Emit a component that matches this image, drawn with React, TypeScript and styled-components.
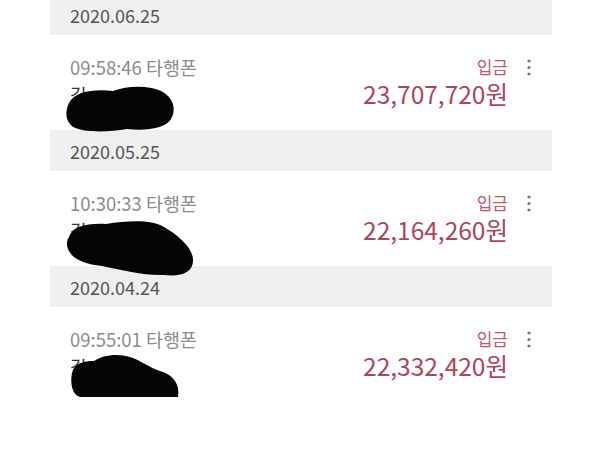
import styled, { createGlobalStyle } from "styled-components";

const GlobalStyle = createGlobalStyle`
	body {
		margin: 0;
		background: #ffffff;
		font-family: "Noto Sans CJK KR", "Noto Sans", sans-serif;
		overflow: hidden;
	}
`;

const Page = styled.div`
	width: 594px;
	height: 458px;
	padding: 0 42px 0 50px;
	box-sizing: border-box;
	overflow: hidden;
`;

const List = styled.div`
	display: flex;
	flex-direction: column;
	margin-top: -6px;
`;

const DateHeader = styled.div`
	height: 41px;
	display: flex;
	align-items: center;
	padding-left: 20px;
	background: #efefef;
	color: #555555;
	font-size: 18px;
	position: relative;
	z-index: 0;
`;

const Row = styled.div`
	position: relative;
	z-index: 1;
	height: 95px;
	box-sizing: border-box;
	display: flex;
	align-items: flex-start;
	padding: 21px 21px 0 20px;
`;

const Left = styled.div`
	flex: 1;
	display: flex;
	flex-direction: column;
`;

const Time = styled.div`
	font-size: 18.5px;
	line-height: 22px;
	color: #8c8c8c;
`;

const Name = styled.div`
	font-size: 18px;
	line-height: 20px;
	margin-top: 6px;
	color: #333333;
`;

const Right = styled.div`
	display: flex;
	flex-direction: column;
	align-items: flex-end;
`;

const Kind = styled.div`
	font-size: 17px;
	line-height: 22px;
	color: #c25b68;
`;

const Amount = styled.div`
	font-size: 24.5px;
	line-height: 30px;
	font-weight: 400;
	color: #b0455a;
	margin-top: 1px;
`;

const Dots = styled.svg`
	margin-left: 19px;
	margin-top: 3px;
	flex: none;
`;

const Scribble = styled.svg<{ $left: number; $top: number }>`
	position: absolute;
	left: ${(p) => p.$left}px;
	top: ${(p) => p.$top}px;
	z-index: 2;
`;

// redaction marks drawn over the account holder name
const blobs = [
	{
		left: 15,
		top: 50,
		w: 112,
		h: 48,
		d: "M4,18 C10,6 30,4 48,6 C62,1 82,0 96,6 C108,12 112,24 106,34 C100,44 80,46 62,44 C44,47 20,48 8,42 C0,36 0,26 4,18 Z",
	},
	{
		left: 16,
		top: 48,
		w: 128,
		h: 58,
		d: "M3,18 C6,8 20,4 40,5 C62,2 84,0 98,8 C112,16 126,28 127,40 C128,53 116,58 98,56 C80,57 56,51 36,47 C18,45 6,40 2,30 C0,25 1,21 3,18 Z",
	},
	{
		left: 20,
		top: 46,
		w: 110,
		h: 44,
		d: "M2,20 C4,10 14,8 24,8 C32,2 48,0 60,4 C72,8 78,14 90,18 C104,22 110,32 108,44 L10,44 C2,42 0,30 2,20 Z",
	},
];

const entries = [
	{ date: "2020.06.25", time: "09:58:46", name: "김", amount: "23,707,720" },
	{ date: "2020.05.25", time: "10:30:33", name: "김", amount: "22,164,260" },
	{ date: "2020.04.24", time: "09:55:01", name: "김", amount: "22,332,420" },
];

function App() {
	return (
		<Page>
			<GlobalStyle />
			<List>
				{entries.map((e, i) => (
					<div key={e.date}>
						<DateHeader>{e.date}</DateHeader>
						<Row>
							<Left>
								<Time>{e.time} 타행폰</Time>
								<Name>{e.name}</Name>
							</Left>
							<Right>
								<Kind>입금</Kind>
								<Amount>{e.amount}원</Amount>
							</Right>
							<Dots width="4" height="18" viewBox="0 0 4 18">
								<circle cx="2" cy="2" r="1.6" fill="#7a7a7a" />
								<circle cx="2" cy="8.5" r="1.6" fill="#7a7a7a" />
								<circle cx="2" cy="15" r="1.6" fill="#7a7a7a" />
							</Dots>
							<Scribble
								$left={blobs[i].left}
								$top={blobs[i].top}
								width={blobs[i].w}
								height={blobs[i].h}
								viewBox={`0 0 ${blobs[i].w} ${blobs[i].h}`}
							>
								<path d={blobs[i].d} fill="#050505" />
							</Scribble>
						</Row>
					</div>
				))}
			</List>
		</Page>
	);
}

export default App;
